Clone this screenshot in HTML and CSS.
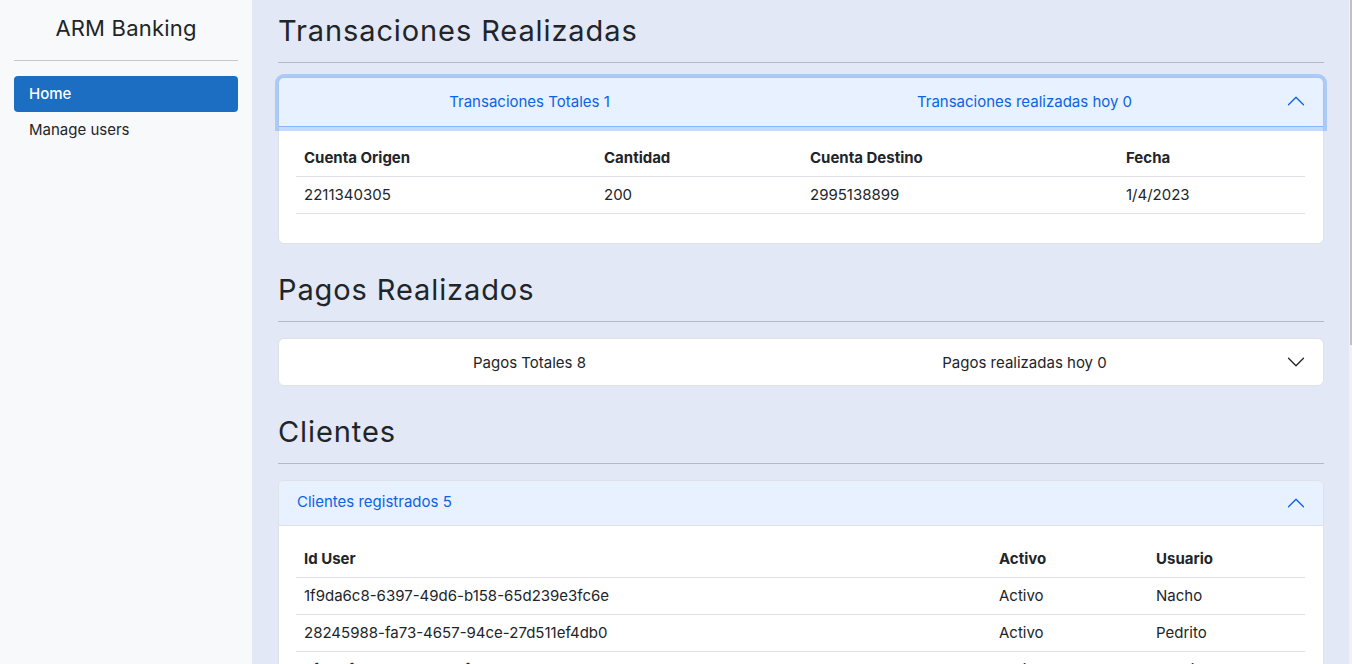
FILE: index.html
```html
<!DOCTYPE html>
<html lang="es">
<head>
<meta charset="utf-8">
<title>ARM Banking</title>
<link rel="stylesheet" href="styles.css">
</head>
<body>
<div class="app">
  <aside class="sidebar">
    <div class="brand">ARM Banking</div>
    <hr class="side-rule">
    <nav class="nav">
      <a class="nav-link active" href="#">Home</a>
      <a class="nav-link" href="#">Manage users</a>
    </nav>
  </aside>

  <main class="main">
    <section class="section">
      <h2 class="title">Transaciones Realizadas</h2>
      <hr class="rule">
      <div class="acc acc-first">
        <div class="acc-head open focus">
          <div class="acc-cols">
            <span class="acc-col">Transaciones Totales 1</span>
            <span class="acc-col">Transaciones realizadas hoy 0</span>
          </div>
          <svg class="chev up" viewBox="0 0 16 16"><path fill="currentColor" fill-rule="evenodd" d="M1.646 4.646a.5.5 0 0 1 .708 0L8 10.293l5.646-5.647a.5.5 0 0 1 .708.708l-6 6a.5.5 0 0 1-.708 0l-6-6a.5.5 0 0 1 0-.708z"/></svg>
        </div>
        <div class="acc-body">
          <table class="tbl">
            <colgroup><col style="width:300px"><col style="width:206px"><col style="width:316px"><col style="width:187px"></colgroup>
            <thead><tr><th>Cuenta Origen</th><th>Cantidad</th><th>Cuenta Destino</th><th>Fecha</th></tr></thead>
            <tbody><tr><td>2211340305</td><td>200</td><td>2995138899</td><td>1/4/2023</td></tr></tbody>
          </table>
        </div>
      </div>
    </section>

    <section class="section">
      <h2 class="title">Pagos Realizados</h2>
      <hr class="rule">
      <div class="acc">
        <div class="acc-head">
          <div class="acc-cols">
            <span class="acc-col">Pagos Totales 8</span>
            <span class="acc-col">Pagos realizadas hoy 0</span>
          </div>
          <svg class="chev" viewBox="0 0 16 16"><path fill="currentColor" fill-rule="evenodd" d="M1.646 4.646a.5.5 0 0 1 .708 0L8 10.293l5.646-5.647a.5.5 0 0 1 .708.708l-6 6a.5.5 0 0 1-.708 0l-6-6a.5.5 0 0 1 0-.708z"/></svg>
        </div>
      </div>
    </section>

    <section class="section">
      <h2 class="title">Clientes</h2>
      <hr class="rule">
      <div class="acc">
        <div class="acc-head open left">
          <span class="acc-label">Clientes registrados 5</span>
          <svg class="chev up" viewBox="0 0 16 16"><path fill="currentColor" fill-rule="evenodd" d="M1.646 4.646a.5.5 0 0 1 .708 0L8 10.293l5.646-5.647a.5.5 0 0 1 .708.708l-6 6a.5.5 0 0 1-.708 0l-6-6a.5.5 0 0 1 0-.708z"/></svg>
        </div>
        <div class="acc-body clients">
          <table class="tbl">
            <colgroup><col style="width:695px"><col style="width:157px"><col style="width:157px"></colgroup>
            <thead><tr><th>Id User</th><th>Activo</th><th>Usuario</th></tr></thead>
            <tbody>
              <tr><td>1f9da6c8-6397-49d6-b158-65d239e3fc6e</td><td>Activo</td><td>Nacho</td></tr>
              <tr><td>28245988-fa73-4657-94ce-27d511ef4db0</td><td>Activo</td><td>Pedrito</td></tr>
              <tr><td>5f1c18f7-a3b7-4c6d-8f1b-d270ea4299c0</td><td>Activo</td><td>Juanito</td></tr>
              <tr><td>7a2e91b4-1c55-4e0a-9b7d-3f6c2a8e1d44</td><td>Activo</td><td>Maria</td></tr>
              <tr><td>9c3d5e2f-8a41-4b6c-a0e7-5d1f3b9c7e22</td><td>Activo</td><td>Lucia</td></tr>
            </tbody>
          </table>
        </div>
      </div>
    </section>
  </main>
  <div class="scrollbar"><div class="thumb"></div></div>
</div>
</body>
</html>
```
FILE: styles.css
```css
* { box-sizing: border-box; }
html, body { margin: 0; padding: 0; }
body {
  font-family: "Inter", "Open Sans", sans-serif;
  color: #212529;
  font-size: 15px;
  overflow: hidden;
}
.app {
  display: flex;
  height: 664px;
  overflow: hidden;
}
.sidebar {
  width: 252px;
  flex: none;
  background: #f8f9fb;
  padding: 0 14px;
}
.brand {
  text-align: center;
  font-size: 22px;
  line-height: 26px;
  padding-top: 15px;
  height: 60px;
  color: #212529;
  letter-spacing: 0.2px;
}
.side-rule {
  border: 0;
  border-top: 1px solid #c6c7ca;
  margin: 0 0 15px;
}
.nav { display: flex; flex-direction: column; }
.nav-link {
  display: block;
  height: 36px;
  line-height: 36px;
  padding-left: 15px;
  border-radius: 4px;
  color: #212529;
  text-decoration: none;
  font-size: 15px;
}
.nav-link.active {
  background: #1b6ec2;
  color: #fff;
  font-weight: 500;
}
.main {
  flex: 1;
  background: #e2e8f5;
  padding: 12px 25px 0 26px;
  min-width: 0;
}
.scrollbar {
  width: 3px;
  flex: none;
  background: #f1f1f1;
  position: relative;
}
.thumb {
  position: absolute;
  right: 0;
  top: 0;
  width: 2px;
  height: 345px;
  background: #c1c1c1;
}
.section { margin-bottom: 27px; }
.title {
  margin: 0;
  height: 34px;
  padding-top: 4px;
  font-size: 29px;
  line-height: 30px;
  font-weight: 400;
  letter-spacing: 0.9px;
  color: #212529;
}
.rule {
  border: 0;
  border-top: 1px solid #b6b9c3;
  margin: 16px 0;
}
.acc {
  background: #fff;
  border: 1px solid #dee2e6;
  border-radius: 6px;
}
.acc-first { margin-top: -2px; }
.acc-head {
  display: flex;
  align-items: center;
  height: 46px;
  padding: 0 17px 0 3px;
  color: #212529;
  border-radius: 5px;
  position: relative;
}
.acc-head.open {
  background: #e7f1ff;
  color: #0c63e4;
  border-bottom: 1px solid #dee2e6;
  border-radius: 5px 5px 0 0;
  height: 45px;
}
.acc-head.focus {
  z-index: 3;
  height: 49px;
  padding-bottom: 2px;
  box-shadow: 0 0 0 4px rgba(13, 110, 253, 0.25);
  border-bottom-color: #86b7fe;
}
.acc-head.left { padding-left: 18px; padding-bottom: 3px; }
.acc-cols { flex: 1; display: flex; }
.acc-col { flex: 1; text-align: center; }
.acc-label { flex: 1; }
.chev {
  width: 20px;
  height: 20px;
  flex: none;
  margin-left: 14px;
}
.acc-head.left .chev { margin-top: 3px; }
.chev.up { transform: rotate(180deg); }
.acc-body { padding: 12px 17px 29px; }
.acc-body.clients { padding-top: 14px; }
.tbl {
  border-collapse: collapse;
  table-layout: fixed;
  width: 1009px;
}
.tbl th, .tbl td {
  text-align: left;
  padding: 8px 8px;
  border-bottom: 1px solid #dee2e6;
  white-space: nowrap;
  overflow: hidden;
}
.tbl th {
  font-weight: 700;
  line-height: 21px;
  font-size: 15px;
  color: #212529;
}
.tbl td {
  padding: 7px 8px;
  line-height: 22px;
  font-size: 15px;
  color: #212529;
}
```
